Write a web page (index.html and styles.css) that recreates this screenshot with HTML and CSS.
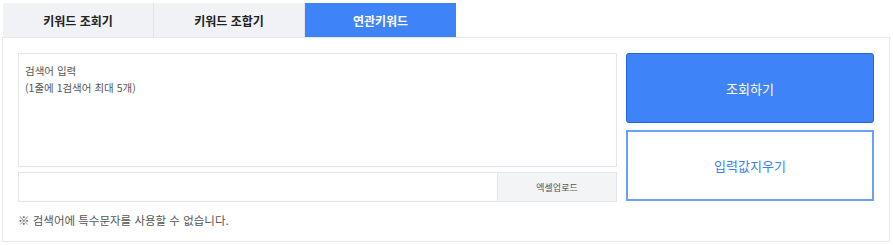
FILE: index.html
```html
<!DOCTYPE html>
<html lang="ko">
<head>
<meta charset="utf-8">
<title>연관키워드</title>
<link rel="stylesheet" href="styles.css">
</head>
<body>
<div class="wrap">
  <div class="tabs">
    <div class="tab">키워드 조회기</div>
    <div class="tab">키워드 조합기</div>
    <div class="tab active">연관키워드</div>
  </div>
  <div class="panel">
    <div class="left">
      <textarea class="area" placeholder="검색어 입력&#10;(1줄에 1검색어 최대 5개)"></textarea>
      <div class="filerow">
        <div class="filename"></div>
        <button class="excel">엑셀업로드</button>
      </div>
      <p class="note">※ 검색어에 특수문자를 사용할 수 없습니다.</p>
    </div>
    <div class="right">
      <button class="btn primary">조회하기</button>
      <button class="btn outline">입력값지우기</button>
    </div>
  </div>
</div>
</body>
</html>
```
FILE: styles.css
```css
* { box-sizing: border-box; }
body {
  margin: 0;
  background: #fff;
  font-family: "Noto Sans CJK KR", "Noto Sans", sans-serif;
}
.wrap {
  margin: 3px 0 0 2px;
  width: 888px;
}
.tabs {
  display: flex;
  padding-left: 1px;
  height: 34px;
}
.tab {
  width: 151px;
  height: 34px;
  background: #f1f2f6;
  border-right: 1px solid #e3e5ea;
  display: flex;
  align-items: center;
  justify-content: center;
  font-size: 12px;
  font-weight: 700;
  color: #222;
}
.tab.active {
  background: #3f83f8;
  color: #fff;
  border-right: none;
}
.panel {
  border: 1px solid #e5e7eb;
  padding: 15px 15px 13px 15px;
  display: flex;
  gap: 9px;
}
.left {
  width: 599px;
  display: flex;
  flex-direction: column;
}
.area {
  display: block;
  width: 599px;
  height: 114px;
  border: 1px solid #e2e5eb;
  padding: 8px 6px;
  resize: none;
  font-family: inherit;
  font-size: 10.5px;
  line-height: 17px;
  color: #333;
  margin: 0;
}
.area::placeholder { color: #555; }
.filerow {
  margin-top: 5px;
  height: 30px;
  border: 1px solid #e2e5eb;
  display: flex;
}
.filename { flex: 1; }
.excel {
  width: 119px;
  border: none;
  border-left: 1px solid #e2e5eb;
  background: #f3f4f6;
  font-family: inherit;
  font-size: 9px;
  color: #555;
  padding: 0;
}
.note {
  margin: 10px 0 0;
  font-size: 11.5px;
  line-height: 16px;
  color: #555;
}
.right {
  flex: 1;
  display: flex;
  flex-direction: column;
  gap: 7px;
}
.btn {
  width: 248px;
  font-family: inherit;
  font-size: 13px;
  padding: 0;
}
.primary {
  height: 70px;
  background: #3f83f8;
  border: 1px solid #1f63e0;
  border-radius: 3px;
  color: #fff;
}
.outline {
  height: 71px;
  background: #fff;
  border: 2px solid #6b9ff8;
  color: #3b7ff5;
}
```
